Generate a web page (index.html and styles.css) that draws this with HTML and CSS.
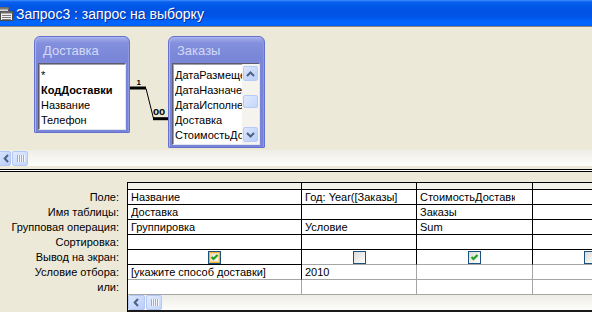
FILE: index.html
```html
<!DOCTYPE html>
<html>
<head>
<meta charset="utf-8">
<title>Запрос3 : запрос на выборку</title>
<link rel="stylesheet" href="styles.css">
</head>
<body>
<div class="window">
  <div class="titlebar">
    <svg class="title-icon" width="13" height="15" viewBox="0 0 13 15">
      <rect x="-3.5" y="1.5" width="12" height="9" fill="#D8D8D8" stroke="#5A5A5A"/>
      <rect x="-3.5" y="1.5" width="12" height="2" fill="#7C7C7C"/>
      <rect x="0.5" y="5.5" width="12" height="9" fill="#F0F0F0" stroke="#4A4A4A"/>
      <rect x="0.5" y="5.5" width="12" height="2" fill="#6C6C6C"/>
      <path d="M2 9.5H11M2 11.5H11M2 13.5H11" stroke="#7A7A7A"/>
    </svg>
    <span class="title-text">Запрос3 : запрос на выборку</span>
  </div>

  <div class="design">
    <svg class="relation" width="592" height="123" viewBox="0 0 592 123">
      <path d="M129 61H146" stroke="#000" stroke-width="3"/>
      <path d="M146 61.5L153.5 91.5" stroke="#000" stroke-width="1"/>
      <path d="M153 91.7H168" stroke="#000" stroke-width="3"/>
      <text x="136.5" y="57.5" class="rel-label one">1</text>
      <text x="153" y="87.5" class="rel-label many">oo</text>
    </svg>

    <div class="table-win t-dost">
      <div class="tw-title">Доставка</div>
      <div class="tw-list">
        <div class="tw-items">
          <div class="tw-item">*</div>
          <div class="tw-item key">КодДоставки</div>
          <div class="tw-item">Название</div>
          <div class="tw-item">Телефон</div>
        </div>
      </div>
    </div>

    <div class="table-win t-zak">
      <div class="tw-title">Заказы</div>
      <div class="tw-list">
        <div class="tw-items">
          <div class="tw-item">ДатаРазмещения</div>
          <div class="tw-item">ДатаНазначения</div>
          <div class="tw-item">ДатаИсполнения</div>
          <div class="tw-item">Доставка</div>
          <div class="tw-item">СтоимостьДоставки</div>
        </div>
        <div class="vscroll">
          <div class="vbtn"><svg width="9" height="6" viewBox="0 0 9 6"><path d="M1 5L4.5 1.5L8 5" stroke="#4D6185" stroke-width="2" fill="none"/></svg></div>
          <div class="vtrack"><div class="vthumb"></div></div>
          <div class="vbtn"><svg width="9" height="6" viewBox="0 0 9 6"><path d="M1 1L4.5 4.5L8 1" stroke="#4D6185" stroke-width="2" fill="none"/></svg></div>
        </div>
      </div>
    </div>
  </div>

  <div class="hscroll top-scroll">
    <div class="sbtn cut"><svg width="7" height="9" viewBox="0 0 7 9"><path d="M5 1L1.7 4.5L5 8" stroke="#4D6185" stroke-width="2" fill="none"/></svg></div>
    <div class="sthumb"><i></i><i></i><i></i><i></i></div>
  </div>

  <div class="splitter"></div>

  <div class="qbe">
    <div class="labels">
      <div class="lbl">Поле:</div>
      <div class="lbl">Имя таблицы:</div>
      <div class="lbl">Групповая операция:</div>
      <div class="lbl">Сортировка:</div>
      <div class="lbl">Вывод на экран:</div>
      <div class="lbl">Условие отбора:</div>
      <div class="lbl">или:</div>
    </div>
    <div class="grid-wrap">
      <div class="grid">
        <div class="hcell"></div><div class="hcell"></div><div class="hcell"></div><div class="hcell"></div>

        <div class="cell"><span>Название</span></div>
        <div class="cell c2"><span>Год: Year([Заказы].[ДатаРазмещения])</span></div>
        <div class="cell"><span>СтоимостьДоставки</span></div>
        <div class="cell"></div>

        <div class="cell"><span>Доставка</span></div>
        <div class="cell"></div>
        <div class="cell"><span>Заказы</span></div>
        <div class="cell"></div>

        <div class="cell"><span>Группировка</span></div>
        <div class="cell"><span>Условие</span></div>
        <div class="cell"><span>Sum</span></div>
        <div class="cell"></div>

        <div class="cell"></div>
        <div class="cell"></div>
        <div class="cell"></div>
        <div class="cell"></div>

        <div class="cell chk"><span class="cb hot"><svg width="11" height="11" viewBox="0 0 11 11"><path d="M2.5 5L4.5 7L8.5 3" stroke="#21A121" stroke-width="2.2" fill="none"/></svg></span></div>
        <div class="cell chk g-b"><span class="cb"></span></div>
        <div class="cell chk g-b"><span class="cb"><svg width="11" height="11" viewBox="0 0 11 11"><path d="M2.5 5L4.5 7L8.5 3" stroke="#21A121" stroke-width="2.2" fill="none"/></svg></span></div>
        <div class="cell chk g-b"><span class="cb"></span></div>

        <div class="cell g-b"><span>[укажите способ доставки]</span></div>
        <div class="cell g"><span>2010</span></div>
        <div class="cell g"></div>
        <div class="cell g"></div>

        <div class="cell g-r"></div>
        <div class="cell g"></div>
        <div class="cell g"></div>
        <div class="cell g"></div>
      </div>
      <div class="hscroll grid-scroll">
        <div class="sbtn"><svg width="7" height="9" viewBox="0 0 7 9"><path d="M5 1L1.7 4.5L5 8" stroke="#4D6185" stroke-width="2" fill="none"/></svg></div>
        <div class="sthumb"><i></i><i></i><i></i><i></i></div>
      </div>
    </div>
  </div>
</div>
</body>
</html>
```

FILE: styles.css
```css
* { box-sizing: border-box; margin: 0; padding: 0; }
html, body { width: 592px; height: 312px; overflow: hidden; }
body {
  background: #ECE9D8;
  font-family: "Liberation Sans", Arial, sans-serif;
  font-size: 11px;
  color: #000;
}

/* ---------- title bar ---------- */
.titlebar {
  height: 27px;
  border-bottom: 1px solid #8A8678;
  background: linear-gradient(to bottom,
    #3D8FFF 0px, #0A60EC 2px, #0058E8 6px, #0052E2 12px,
    #0054E6 16px, #0062FA 21px, #0068FF 24px, #0058F0 26px);
  display: flex;
  align-items: center;
  gap: 3px;
}
.title-icon { flex: none; margin-top: 1px; }
.title-text {
  color: #fff;
  font-size: 14px;
  line-height: 16px;
  padding-top: 1px;
  text-shadow: 1px 1px 0 #0B2A8E;
  white-space: nowrap;
}

/* ---------- design surface ---------- */
.design {
  height: 123px;
  position: relative;
}
.relation { position: absolute; left: 0; top: 0; }
.rel-label { font-family: "Liberation Sans", Arial, sans-serif; font-weight: bold; fill: #000; }
.rel-label.one { font-size: 8px; }
.rel-label.many { font-size: 10px; }

.table-win {
  position: absolute;
  top: 9px;
  border: 1px solid #6571CE;
  border-radius: 6px 6px 1px 1px;
  background: linear-gradient(to bottom, #A7B0EE 0px, #8390DD 6px, #7A87D8 20px, #7683D6 100%);
  box-shadow: inset 1px 1px 0 #A9B3EF, inset -1px 0 0 #8C97E0;
  padding: 0 3px 2px 3px;
  display: flex;
  flex-direction: column;
}
.t-dost { left: 34px; width: 96px; height: 97px; }
.t-zak { left: 168px; width: 97px; height: 112px; padding-right: 4px; }

.tw-title {
  height: 26px;
  flex: none;
  color: #D2D9F6;
  font-size: 13px;
  line-height: 28px;
  padding-left: 5px;
  white-space: nowrap;
}
.tw-list {
  flex: 1;
  display: flex;
  background: #fff;
  border: 1px solid;
  border-color: #5C5C6E #E4E4EC #E4E4EC #5C5C6E;
  box-shadow: inset 1px 1px 0 #A0A0A8;
  overflow: hidden;
}
.tw-items {
  flex: 1;
  min-width: 0;
  padding: 4px 0 0 2px;
  overflow: hidden;
}
.tw-item {
  height: 15px;
  line-height: 15px;
  white-space: nowrap;
  overflow: hidden;
}
.tw-item.key { font-weight: bold; }

.vscroll {
  width: 17px;
  flex: none;
  display: flex;
  flex-direction: column;
  background: #F4F3EE;
  padding: 2px 0 2px 0;
}
.vbtn {
  height: 15px;
  margin: 0 1px;
  border: 1px solid #B8CBF6;
  border-radius: 2px;
  background: linear-gradient(135deg, #DCE7FE, #B9CDF8);
  display: flex;
  align-items: center;
  justify-content: center;
  flex: none;
}
.vtrack { flex: 1; padding-top: 14px; }
.vthumb {
  height: 13px;
  margin: 0 1px;
  border: 1px solid #B8CBF6;
  border-radius: 2px;
  background: linear-gradient(135deg, #E1EAFE, #C4D6FB);
}

/* ---------- horizontal scrollbars ---------- */
.hscroll {
  display: flex;
  align-items: center;
  gap: 1px;
  background: linear-gradient(to bottom, #EEEDE6, #FDFDFB);
}
.top-scroll { height: 16px; }
.sbtn {
  width: 17px;
  height: 15px;
  flex: none;
  border: 1px solid #B4C8F6;
  border-radius: 2px;
  background: linear-gradient(135deg, #DCE7FE, #B9CDF8);
  display: flex;
  align-items: center;
  justify-content: center;
}
.sbtn.cut { margin-left: -6px; padding-left: 8px; justify-content: flex-start; }
.sthumb {
  width: 16px;
  height: 15px;
  flex: none;
  border: 1px solid #B4C8F6;
  border-radius: 2px;
  background: linear-gradient(135deg, #E1EAFE, #C4D6FB);
  display: flex;
  align-items: center;
  justify-content: center;
  gap: 1px;
}
.sthumb i {
  display: block;
  width: 1px;
  height: 7px;
  background: #8DAEF5;
  box-shadow: 1px 0 0 #F2F6FF;
}

/* ---------- splitter ---------- */
.splitter {
  margin-top: 3px;
  height: 3px;
  border-top: 1px solid #000;
  border-bottom: 1px solid #000;
  background: #fff;
}

/* ---------- QBE grid ---------- */
.qbe {
  display: flex;
  margin-top: 10px;
}
.labels {
  width: 127px;
  flex: none;
  padding-top: 8px;
}
.lbl {
  height: 15px;
  line-height: 14px;
  text-align: right;
  padding-right: 8px;
  white-space: nowrap;
}
.grid-wrap {
  flex: 1;
  min-width: 0;
  overflow: hidden;
  border-left: 1px solid #000;
}
.grid {
  display: grid;
  grid-template-columns: 174px 115px 116px 116px;
  width: max-content;
  border-top: 1px solid #000;
}
.hcell {
  height: 7px;
  background: #F2F1EA;
  border-right: 1px solid #000;
  border-bottom: 1px solid #000;
}
.cell {
  height: 15px;
  background: #fff;
  border-right: 1px solid #000;
  border-bottom: 1px solid #000;
  padding: 0 17px 0 3px;
  line-height: 14px;
  white-space: nowrap;
  overflow: hidden;
}
.cell.c2 { padding-right: 18px; }
.cell span { display: block; overflow: hidden; }
.cell.g-b { border-bottom-color: #A5A5A5; }
.cell.g { border-color: #A5A5A5; }
.cell.g-r { border-bottom-color: #A5A5A5; border-right-color: #A5A5A5; }
.cell.chk {
  padding: 0;
  display: flex;
  align-items: center;
  justify-content: center;
}
.cb {
  width: 13px;
  height: 13px;
  border: 1px solid #1C5180;
  background: linear-gradient(135deg, #DCDCD7, #FFFFFF);
  display: flex;
  align-items: center;
  justify-content: center;
}
.cb.hot {
  box-shadow: inset 0 0 0 1px #F6B43A, inset 0 0 0 2px #FCD98E;
}
.grid-scroll {
  height: 17px;
  border-bottom: 2px solid #1A1A1A;
  align-items: flex-start;
}
```
